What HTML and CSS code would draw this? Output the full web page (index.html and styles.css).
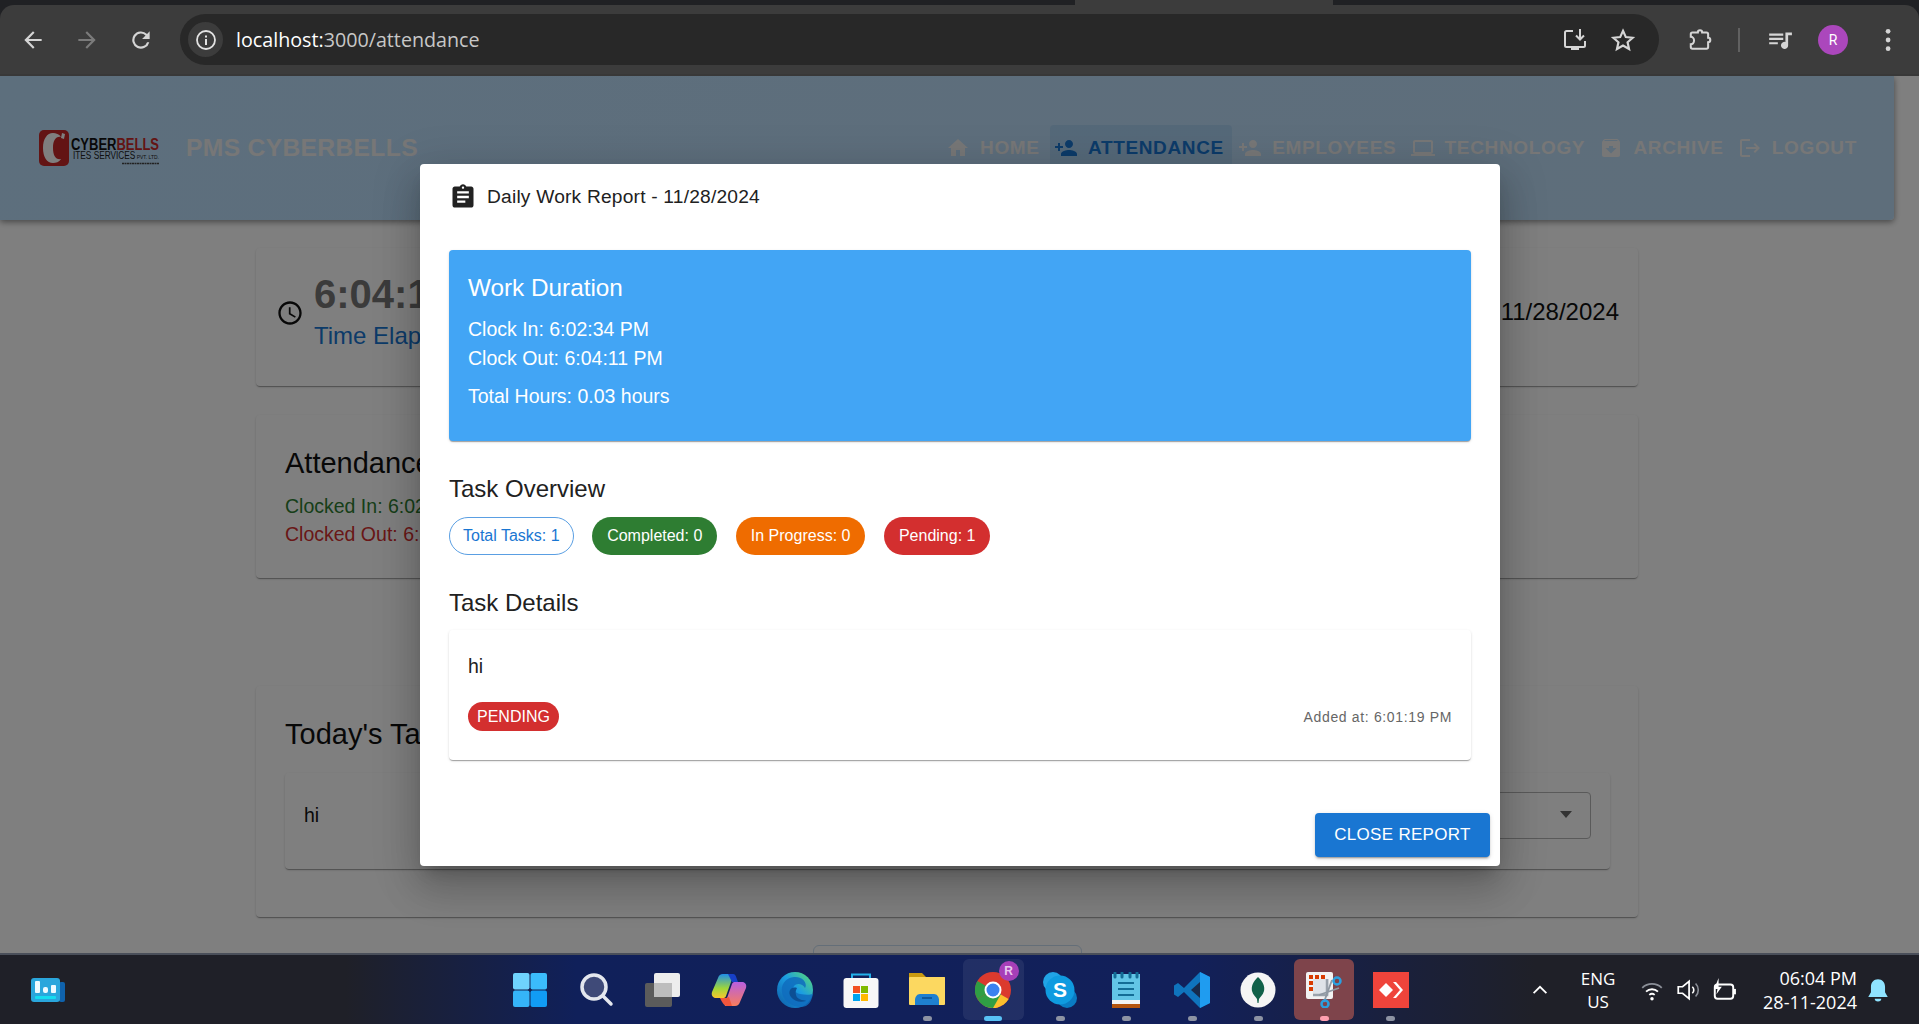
FILE: index.html
```html
<!DOCTYPE html>
<html lang="en">
<head>
  <meta charset="UTF-8" />
  <title>PMS Cyberbells</title>
  <link rel="stylesheet" href="styles.css">
</head>
<body>

  <!-- Browser chrome -->
  <div class="tabstrip"><span class="tab-active"></span></div>
  <header class="toolbar">
    <svg class="tb-ico" viewBox="0 0 24 24"><path d="M20 11H7.800l5.600-5.600L12 4l-8 8 8 8 1.400-1.400L7.800 13H20z"/></svg>
    <svg class="tb-ico tb-off" viewBox="0 0 24 24"><path d="M4 11h12.200l-5.600-5.600L12 4l8 8-8 8-1.400-1.400 5.600-5.600H4z"/></svg>
    <svg class="tb-ico" viewBox="0 0 24 24"><path d="M17.600 6.400A8 8 0 1 0 19.700 14h-2.100a6 6 0 1 1-1.400-6.200L13 11h7V4z"/></svg>
    <div class="omnibox">
      <span class="site-info">
        <svg viewBox="0 0 24 24"><circle cx="12" cy="12" r="9" fill="none" stroke="#e3e3e3" stroke-width="1.800"/><path fill="#e3e3e3" d="M11 11h2v6h-2zM11 7.500h2v2h-2z"/></svg>
      </span>
      <span class="url"><b>localhost:</b>3000/attendance</span>
      <svg class="omni-ico" viewBox="0 0 26 26"><path fill="none" stroke="#d5d5d5" stroke-width="2" d="M11 4H4.500A1.500 1.500 0 0 0 3 5.500v13A1.500 1.500 0 0 0 4.500 20h17a1.500 1.500 0 0 0 1.500-1.500V14"/><path fill="#d5d5d5" d="M9 20h8v3H9z"/><path fill="none" stroke="#d5d5d5" stroke-width="2" d="M18 2v10M14 8.500l4 4 4-4"/></svg>
      <svg class="omni-ico star" viewBox="0 0 24 24"><path fill="none" stroke="#d5d5d5" stroke-width="2" d="M12 3.500l2.600 5.800 6.300.6-4.700 4.200 1.400 6.200L12 17.100l-5.600 3.200 1.400-6.200L3.100 9.900l6.300-.6z"/></svg>
    </div>
    <svg class="tb-ico ext" viewBox="0 0 24 24"><path fill="none" stroke="#d5d5d5" stroke-width="1.900" d="M5 5h5a2 2 0 0 1 4 0h4a1.500 1.500 0 0 1 1.500 1.500V10a2 2 0 0 1 0 4v4.500A1.500 1.500 0 0 1 18 20H5a1.500 1.500 0 0 1-1.500-1.500V16a3 3.500 0 0 0 0-7V6.500A1.500 1.500 0 0 1 5 5z"/></svg>
    <span class="tb-divider"></span>
    <svg class="tb-ico media" viewBox="0 0 24 24"><path d="M2 6h13v2H2zM2 10h13v2H2zM2 14h8v2H2zM17 5h6v2.500h-3.500V17a3.300 3.300 0 1 1-2.500-3.200z"/></svg>
    <span class="avatar">R</span>
    <svg class="tb-ico dots" viewBox="0 0 24 24"><circle cx="13" cy="4" r="2.200"/><circle cx="13" cy="12" r="2.200"/><circle cx="13" cy="20" r="2.200"/></svg>
  </header>

  <main class="viewport">
    <div class="page">
      <div class="appbar">
        <svg class="logo" viewBox="0 0 122 36">
          <rect x="1" y="0" width="30" height="36" rx="5" fill="#c62828"/>
          <path d="M23 7c-2-3-5-4-8-4C9 3 5 9 5 18s4 15 10 15c3 0 6-1 8-4-5 1-8-3-8-11s3-12 8-11z" fill="#fff"/>
          <path d="M24 3l3 1-1 5-3-1z" fill="#fff"/>
          <text x="33" y="20" class="logo-big" textLength="88" lengthAdjust="spacingAndGlyphs">CYBER<tspan fill="#c62828">BELLS</tspan></text>
          <text x="35" y="29" class="logo-small" textLength="86" lengthAdjust="spacingAndGlyphs">ITES SERVICES<tspan class="logo-tiny"> PVT. LTD.</tspan></text>
          <path d="M84 33.500h37" stroke="#444" stroke-width="1.500" stroke-dasharray="2 .5"/>
        </svg>
        <span class="brand">PMS CYBERBELLS</span>
        <nav class="nav">
          <a class="nav-btn"><svg viewBox="0 0 24 24"><path d="M10 20v-6h4v6h5v-8h3L12 3 2 12h3v8z"/></svg>HOME</a>
          <a class="nav-btn active"><svg viewBox="0 0 24 24"><path d="M15 12c2.210 0 4-1.790 4-4s-1.790-4-4-4-4 1.790-4 4 1.790 4 4 4zm-9-2V7H4v3H1v2h3v3h2v-3h3v-2H6zm9 4c-2.670 0-8 1.340-8 4v2h16v-2c0-2.660-5.330-4-8-4z"/></svg>ATTENDANCE</a>
          <a class="nav-btn"><svg viewBox="0 0 24 24"><path d="M15 12c2.210 0 4-1.790 4-4s-1.790-4-4-4-4 1.790-4 4 1.790 4 4 4zm-9-2V7H4v3H1v2h3v3h2v-3h3v-2H6zm9 4c-2.670 0-8 1.340-8 4v2h16v-2c0-2.660-5.330-4-8-4z"/></svg>EMPLOYEES</a>
          <a class="nav-btn"><svg viewBox="0 0 24 24"><path d="M20 18c1.100 0 1.990-.9 1.990-2L22 6c0-1.100-.9-2-2-2H4c-1.100 0-2 .9-2 2v10c0 1.100.9 2 2 2H0v2h24v-2h-4zM4 6h16v10H4V6z"/></svg>TECHNOLOGY</a>
          <a class="nav-btn"><svg viewBox="0 0 24 24"><path d="M20.540 5.230l-1.390-1.680C18.880 3.210 18.470 3 18 3H6c-.47 0-.88.21-1.160.55L3.460 5.230C3.170 5.570 3 6.020 3 6.500V19c0 1.100.9 2 2 2h14c1.100 0 2-.9 2-2V6.500c0-.48-.17-.93-.46-1.270zM12 17.500 6.500 12H10v-2h4v2h3.500L12 17.500zM5.120 5l.81-1h12l.94 1H5.120z"/></svg>ARCHIVE</a>
          <a class="nav-btn"><svg viewBox="0 0 24 24"><path d="M17 7l-1.410 1.410L18.170 11H8v2h10.170l-2.580 2.580L17 17l5-5zM4 5h8V3H4c-1.100 0-2 .9-2 2v14c0 1.100.9 2 2 2h8v-2H4V5z"/></svg>LOGOUT</a>
        </nav>
      </div>

      <section class="card clock-card">
        <svg class="clock-ico" viewBox="0 0 24 24"><path d="M11.990 2C6.470 2 2 6.480 2 12s4.470 10 9.990 10C17.520 22 22 17.520 22 12S17.520 2 11.990 2zM12 20c-4.420 0-8-3.580-8-8s3.580-8 8-8 8 3.580 8 8-3.580 8-8 8zm.5-13H11v6l5.250 3.150.75-1.230-4.500-2.670z"/></svg>
        <div class="clock-text">
          <div class="clock-time">6:04:11 PM</div>
          <div class="clock-sub">Time Elapsed: 00:01:37</div>
        </div>
        <div class="clock-date">11/28/2024</div>
      </section>

      <section class="card status-card">
        <h3 class="card-title">Attendance Status</h3>
        <p class="st-in">Clocked In: 6:02:34 PM</p>
        <p class="st-out">Clocked Out: 6:04:11 PM</p>
      </section>

      <section class="card tasks-card">
        <h3 class="card-title">Today's Tasks</h3>
        <div class="task-row">
          <span class="task-row-name">hi</span>
          <div class="select"><span class="select-arrow"></span></div>
        </div>
      </section>

      <div class="report-btn-ghost"></div>
    </div>

    <!-- Dialog over the page -->
    <div class="overlay">
      <div class="modal">
        <div class="modal-title">
          <svg viewBox="0 0 24 24"><path d="M19 3h-4.180C14.400 1.840 13.300 1 12 1c-1.300 0-2.400.84-2.820 2H5c-1.100 0-2 .9-2 2v14c0 1.100.9 2 2 2h14c1.100 0 2-.9 2-2V5c0-1.100-.9-2-2-2zm-7 0c.55 0 1 .45 1 1s-.45 1-1 1-1-.45-1-1 .45-1 1-1zm2 14H7v-2h7v2zm3-4H7v-2h10v2zm0-4H7V7h10v2z"/></svg>
          <span>Daily Work Report - 11/28/2024</span>
        </div>
        <div class="duration">
          <h4>Work Duration</h4>
          <p>Clock In: 6:02:34 PM</p>
          <p>Clock Out: 6:04:11 PM</p>
          <p class="total">Total Hours: 0.03 hours</p>
        </div>
        <h5 class="sec-title">Task Overview</h5>
        <div class="chips">
          <span class="chip chip-total">Total Tasks: 1</span>
          <span class="chip chip-done">Completed: 0</span>
          <span class="chip chip-prog">In Progress: 0</span>
          <span class="chip chip-pend">Pending: 1</span>
        </div>
        <h5 class="sec-title details">Task Details</h5>
        <div class="task-card">
          <div class="task-name">hi</div>
          <div class="task-foot">
            <span class="badge">PENDING</span>
            <span class="added">Added at: 6:01:19 PM</span>
          </div>
        </div>
        <div class="modal-actions"><button class="close-btn">CLOSE REPORT</button></div>
      </div>
    </div>
  </main>

  <!-- Windows taskbar -->
  <footer class="taskbar">
    <svg class="widget" viewBox="0 0 34 24">
      <rect x="28" y="4" width="6" height="20" rx="2" fill="#0f62ac"/>
      <rect x="0" y="0" width="29" height="24" rx="3" fill="#2aa6dc"/>
      <rect x="4" y="3" width="5" height="12" rx="1" fill="#eefaff"/>
      <rect x="12" y="9" width="5" height="6" rx="2" fill="#eefaff"/>
      <rect x="20" y="7" width="5" height="8" rx="1" fill="#eefaff"/>
      <rect x="4" y="18" width="21" height="3" rx="1" fill="#16dcf0"/>
    </svg>
    <div class="tray-apps">
      <span class="app"><svg viewBox="0 0 36 36"><rect x="1" y="1" width="16.500" height="16.500" rx="2" fill="#6fd3fd"/><rect x="18.500" y="1" width="16.500" height="16.500" rx="2" fill="#3bbcfb"/><rect x="1" y="18.500" width="16.500" height="16.500" rx="2" fill="#35b4f8"/><rect x="18.500" y="18.500" width="16.500" height="16.500" rx="2" fill="#119cf5"/></svg></span>
      <span class="app"><svg viewBox="0 0 36 36"><circle cx="16" cy="15" r="12" fill="#3f4a78" stroke="#e4e7ee" stroke-width="3.500"/><path d="M25 24l8 8" stroke="#e4e7ee" stroke-width="3.500" stroke-linecap="round"/></svg></span>
      <span class="app"><svg viewBox="0 0 36 36"><rect x="1" y="11" width="27" height="24" rx="2" fill="#5b5b5b"/><rect x="10" y="1" width="26" height="24" rx="2" fill="#ededed"/><rect x="10" y="11" width="18" height="14" fill="#bdbdbd"/></svg></span>
      <span class="app"><svg viewBox="0 0 36 36"><defs><linearGradient id="cpa" x1="0" y1="0" x2="0" y2="1"><stop offset="0" stop-color="#1f8fe8"/><stop offset=".6" stop-color="#9fd63a"/><stop offset="1" stop-color="#f7c62e"/></linearGradient><linearGradient id="cpb" x1="0" y1="1" x2="0" y2="0"><stop offset="0" stop-color="#b85fe0"/><stop offset="1" stop-color="#f77d5d"/></linearGradient></defs><path d="M12 2h9c1 0 1.500.8 1.200 1.800L15 24c-.5 1.500-1.500 2-3 2H5c-3 0-5-2.500-4-6L7 6c.8-2.500 2.500-4 5-4z" fill="url(#cpa)"/><path transform="rotate(180 18 18)" d="M12 2h9c1 0 1.500.8 1.200 1.800L15 24c-.5 1.500-1.500 2-3 2H5c-3 0-5-2.500-4-6L7 6c.8-2.500 2.500-4 5-4z" fill="url(#cpb)"/><path d="M17 2h5c2 0 3 2 3.500 4l1.500 4h-6z" fill="#1740c8"/><path d="M9 26h6l3-1 3 9h-5c-3 0-5-4-7-8z" fill="#f0553c"/></svg></span>
      <span class="app"><svg viewBox="0 0 36 36"><defs><linearGradient id="edg" x1="0" y1="1" x2="1" y2="0"><stop offset="0" stop-color="#0c59a4"/><stop offset=".55" stop-color="#1b9de2"/><stop offset="1" stop-color="#5fe06a"/></linearGradient></defs><circle cx="18" cy="18" r="18" fill="url(#edg)"/><path d="M36 22c-3 1-8 1-13 0-5-1-9-6-5-9 3-2 8-1 10 3 3-5-3-12-11-11C8 6 2 14 6 24c3 8 14 13 23 10 4-2 6-7 7-12z" fill="#0f6cbd" opacity=".85"/><path d="M20 16c-6-2-10 4-6 9 3 4 9 6 15 4 1-1-9 0-10-6-1-3 0-5 1-7z" fill="#0c4f94"/></svg></span>
      <span class="app"><svg viewBox="0 0 36 36"><path d="M9 7V2.500h18V7" fill="none" stroke="#22b0ea" stroke-width="2"/><rect x="0.500" y="6" width="35" height="30" rx="3" fill="#f7f7f7"/><rect x="10" y="14" width="7" height="7" fill="#f25022"/><rect x="18" y="14" width="7" height="7" fill="#7fba00"/><rect x="10" y="22" width="7" height="7" fill="#00a4ef"/><rect x="18" y="22" width="7" height="7" fill="#ffb900"/></svg></span>
      <span class="app"><svg viewBox="0 0 36 36"><path d="M0 1h13l4 4h19v6H0z" fill="#c99a10"/><rect x="0" y="5" width="36" height="28" rx="1" fill="#fcd860"/><path d="M6 28c0-3 2-6 5-6h14c3 0 5 3 5 6v5H6z" fill="#1f80d0"/><rect x="13" y="25" width="10" height="2" fill="#0f5a9e"/></svg><i class="pip"></i></span>
      <span class="app app-on"><svg viewBox="0 0 36 36"><circle cx="18" cy="18" r="18" fill="#db3a2e"/><path d="M18 18L33.600 27A18 18 0 0 1 9 33.600z" fill="#fbc02d"/><path d="M18 18L2.400 27A18 18 0 0 1 2.400 9z" fill="#2f9e44"/><path d="M2.400 27A18 18 0 0 0 18 36L26 22 18 18z" fill="#2f9e44"/><circle cx="18" cy="18" r="8.500" fill="#fff"/><circle cx="18" cy="18" r="6.500" fill="#3b82f0"/></svg><span class="profile-dot">R</span><i class="pip pip-on"></i></span>
      <span class="app"><svg viewBox="0 0 36 36"><circle cx="11" cy="10" r="10" fill="#21a4e6"/><circle cx="25" cy="26" r="10" fill="#0a7cc4"/><circle cx="18" cy="18" r="14.500" fill="#0f9be0"/><text x="18" y="25" class="skype-s">S</text></svg><i class="pip"></i></span>
      <span class="app"><svg viewBox="0 0 36 36"><rect x="4" y="2" width="28" height="30" fill="#62c5e6"/><rect x="4" y="30" width="28" height="6" fill="#b5550f"/><rect x="4" y="28" width="28" height="4" fill="#f4f4f4"/><path d="M10 11h16M10 17h16M10 23h16" stroke="#136d96" stroke-width="2"/><path d="M7 1v4M14 1v4M22 1v4M29 1v4" stroke="#136d96" stroke-width="3" stroke-linecap="round"/></svg><i class="pip"></i></span>
      <span class="app"><svg viewBox="0 0 36 36"><path d="M26 0l10 5v26l-10 5L10 20l-6 5-4-2.500V13.500L4 11l6 5z" fill="#0f74bd"/><path d="M26 0l10 5v26l-10 5z" fill="#1f9cf0"/><path d="M26 10l-9 8 9 8z" fill="#18243f" opacity=".9"/></svg><i class="pip"></i></span>
      <span class="app"><svg viewBox="0 0 36 36"><circle cx="18" cy="18" r="17.500" fill="#f5f5f5"/><path d="M18 5c5 5 7 9 6 14-1 4-4 6-5 8l-.5 4h-1l-.5-4c-1-2-4-4-5-8-1-5 1-9 6-14z" fill="#116149"/></svg><i class="pip"></i></span>
      <span class="app app-snip"><svg viewBox="0 0 36 36"><rect x="0" y="0" width="27" height="27" rx="2" fill="#f2f2f2"/><path d="M3 3h4v4H3zM9 3h4v4H9zM15 3h4v4h-4zM3 9h4v4H3zM3 15h4v4H3z" fill="#d83b01"/><rect x="7" y="7" width="16" height="16" fill="#dfe3e8"/><path d="M21 7v16H7" fill="none" stroke="#9aa2ab" stroke-width="2.500"/><path d="M13 23l20-7M26 8L18 30" stroke="#8f98a2" stroke-width="1.800"/><circle cx="31" cy="9" r="3.500" fill="none" stroke="#2aa0e0" stroke-width="2.500"/><circle cx="19" cy="32" r="3.500" fill="none" stroke="#2aa0e0" stroke-width="2.500"/></svg><i class="pip pip-pink"></i></span>
      <span class="app"><svg viewBox="0 0 36 36"><rect width="36" height="36" fill="#ef443b"/><path d="M13 11l7 7-7 7-7-7z" fill="#fff"/><path d="M20 10h3l7 8-7 8h-3l7-8z" fill="#fff"/></svg><i class="pip"></i></span>
    </div>
    <div class="sys">
      <svg class="sys-chev" viewBox="0 0 20 12"><path d="M2 10l8-8 8 8" fill="none" stroke="#fff" stroke-width="2.200"/></svg>
      <div class="lang"><span>ENG</span><span>US</span></div>
      <svg class="sys-ico" viewBox="0 0 24 24"><g fill="none" stroke="#fff" stroke-width="1.700"><path d="M6.500 13.500a8 8 0 0 1 11 0M9.500 16.500a4 4 0 0 1 5 0"/><path stroke="#8b8f98" d="M3 10a13 13 0 0 1 18 0"/></g><circle cx="12" cy="20" r="1.600" fill="#fff"/></svg>
      <svg class="sys-ico" viewBox="0 0 24 24"><path d="M3 9h4l6-5v16l-6-5H3z" fill="none" stroke="#fff" stroke-width="1.600"/><path d="M16 9a4 4 0 0 1 0 6" fill="none" stroke="#fff" stroke-width="1.500"/><path d="M19 6a8.500 8.500 0 0 1 0 12" fill="none" stroke="#8b8f98" stroke-width="1.500"/></svg>
      <svg class="sys-ico" viewBox="0 0 24 24"><rect x="3.500" y="7" width="17" height="13" rx="2.500" fill="none" stroke="#fff" stroke-width="1.800"/><rect x="21" y="11" width="2" height="5" fill="#fff"/><path d="M7 1L3 11h3l-1 5 5-7H7z" fill="#fff"/></svg>
      <div class="clock"><span>06:04 PM</span><span>28-11-2024</span></div>
      <svg class="bell" viewBox="0 0 24 24"><path d="M12 2c-4 0-6.500 3-6.500 7v5L3 18.500h18L18.500 14V9C18.500 5 16 2 12 2zM9 20a3 2.500 0 0 0 6 0z" fill="#8fe3ff"/></svg>
    </div>
  </footer>

</body>
</html>
```

FILE: styles.css
```css
* {
  box-sizing: border-box;
}

html, body {
  height: 100%;
}

body {
  margin: 0;
  display: flex;
  flex-direction: column;
  height: 1024px;
  overflow: hidden;
  font-family: 'Liberation Sans', Arial, sans-serif;
  background: #202124;
  color: #212121;
}

/* Browser */
.tabstrip {
  height: 5px;
  background: #202124;
  position: relative;
  flex: none;
}

.tab-active {
  position: absolute;
  left: 1075px;
  width: 258px;
  top: 0;
  bottom: 0;
  background: #3c3c3c;
}

.toolbar {
  height: 71px;
  flex: none;
  display: flex;
  align-items: center;
  padding-left: 20px;
  background: #3c3c3c;
  border-bottom: 2px solid #383838;
  border-radius: 14px 14px 0 0;
}

.tb-ico {
  width: 26px;
  height: 26px;
  fill: #d5d5d5;
  flex: none;
  margin-right: 28px;
}

.tb-off {
  fill: #7b7b7b;
}

.omnibox {
  width: 1479px;
  height: 51px;
  margin: 0 28px 0 -2px;
  border-radius: 26px;
  background: #282828;
  display: flex;
  align-items: center;
  padding-left: 8px;
  flex: none;
}

.site-info {
  width: 35px;
  height: 35px;
  border-radius: 50%;
  background: #3c3c3c;
  display: flex;
  align-items: center;
  justify-content: center;
}

.site-info svg {
  width: 24px;
  height: 24px;
}

.url {
  margin-left: 13px;
  font-family: 'Open Sans', sans-serif;
  font-size: 19.7px;
  color: #c7c7c7;
  flex: 1;
}

.url b {
  font-weight: 400;
  color: #fff;
}

.omni-ico {
  width: 26px;
  height: 26px;
  margin-right: 22px;
}

.omni-ico.star {
  margin-right: 23px;
}

.ext {
  margin-right: 25px;
}

.tb-divider {
  width: 2px;
  height: 24px;
  background: #616161;
  margin-right: 27px;
}

.media {
  margin-right: 25px;
}

.avatar {
  width: 30px;
  height: 30px;
  border-radius: 50%;
  background: #ab47bc;
  color: #fff;
  font-family: Roboto, sans-serif;
  font-size: 14px;
  display: flex;
  align-items: center;
  justify-content: center;
  margin-right: 26px;
  flex: none;
}

.dots {
  margin-right: 0;
}

/* Page behind dialog */
.viewport {
  position: relative;
  flex: 1;
  overflow: hidden;
  min-height: 0;
  background: #fff;
}

.page {
  height: 100%;
  overflow: hidden;
}

.appbar {
  width: 1894px;
  height: 144px;
  display: flex;
  align-items: center;
  padding: 0 29px 0 38px;
  background: linear-gradient(135deg, #bbdefb, #bcdcf6);
  box-shadow: 0 2px 6px rgba(0, 0, 0, .45);
  border-radius: 0 0 4px 0;
}

.logo {
  width: 122px;
  height: 36px;
  flex: none;
}

.logo-big {
  font: 700 16px 'Liberation Sans', sans-serif;
  fill: #111;
}

.logo-small {
  font: 400 10px 'Liberation Sans', sans-serif;
  fill: #222;
}

.logo-tiny {
  font-size: 6px;
}

.brand {
  margin-left: 26px;
  font-size: 24.7px;
  font-weight: 700;
  color: #eee;
  letter-spacing: .3px;
}

.nav {
  margin-left: auto;
  display: flex;
  align-items: center;
  gap: 2.3px;
}

.nav-btn {
  height: 47px;
  display: flex;
  align-items: center;
  padding: 0 8px 0 4px;
  border-radius: 4px;
  font-size: 19px;
  font-weight: 700;
  letter-spacing: .65px;
  color: #eee;
}

.nav-btn svg {
  width: 24px;
  height: 24px;
  fill: currentColor;
  margin-right: 10px;
}

.nav-btn.active {
  color: #1976d2;
  background: rgba(25, 118, 210, .1);
}

.card {
  width: 1382px;
  margin-left: 256px;
  background: #fff;
  border-radius: 4px;
  box-shadow: 0 2px 1px -1px rgba(0, 0, 0, .2), 0 1px 1px rgba(0, 0, 0, .14), 0 1px 3px rgba(0, 0, 0, .12);
}

.clock-card {
  height: 138px;
  margin-top: 28px;
  display: flex;
  align-items: center;
  padding: 0 19px 0 20px;
}

.clock-ico {
  width: 28px;
  height: 28px;
  fill: #111;
  margin-top: -9px;
}

.clock-text {
  margin: -10px 0 0 10px;
  flex: 1;
}

.clock-time {
  font-size: 40px;
  font-weight: 700;
  color: #777;
  line-height: 47px;
}

.clock-sub {
  font-size: 24px;
  color: #1976d2;
  line-height: 36px;
}

.clock-date {
  font-size: 24px;
  color: #111;
  margin-top: -10px;
}

.status-card {
  height: 163px;
  margin-top: 29px;
  padding: 28px 28px 0 29px;
}

.card-title {
  margin: 0;
  font-size: 29px;
  font-weight: 400;
  line-height: 40px;
  color: #111;
}

.status-card p {
  margin: 0;
  font-size: 19.5px;
  line-height: 28px;
}

.status-card .card-title {
  margin-bottom: 9px;
}

.st-in {
  color: #2e7d32;
}

.st-out {
  color: #d32f2f;
}

.tasks-card {
  height: 231px;
  margin-top: 108px;
  padding: 28px 28px 28px 29px;
}

.tasks-card .card-title {
  margin-bottom: 19px;
}

.task-row {
  height: 96px;
  display: flex;
  justify-content: space-between;
  padding: 19px 19px 0 19px;
  border-radius: 4px;
  font-size: 19.5px;
  line-height: 28px;
  color: #111;
  box-shadow: 0 2px 1px -1px rgba(0, 0, 0, .2), 0 1px 1px rgba(0, 0, 0, .14), 0 1px 3px rgba(0, 0, 0, .12);
}

.task-row-name {
  padding-top: 9px;
}

.select {
  width: 200px;
  height: 47px;
  border: 1px solid #b5b5b5;
  border-radius: 4px;
  position: relative;
}

.select-arrow {
  position: absolute;
  right: 18px;
  top: 18px;
  border-left: 6px solid transparent;
  border-right: 6px solid transparent;
  border-top: 7px solid #666;
}

.report-btn-ghost {
  width: 269px;
  height: 40px;
  margin: 28px 0 0 813px;
  border: 1px solid #c8dcf0;
  border-radius: 6px;
}

/* Dialog */
.overlay {
  position: absolute;
  inset: 0;
  background: rgba(0, 0, 0, .5);
  padding: 88px 0 0 420px;
}

.modal {
  width: 1080px;
  height: 702px;
  background: #fff;
  border-radius: 4px;
  padding: 0 29px;
  box-shadow: 0 11px 15px -7px rgba(0, 0, 0, .2), 0 24px 38px 3px rgba(0, 0, 0, .14), 0 9px 46px 8px rgba(0, 0, 0, .12);
}

.modal-title {
  height: 66px;
  display: flex;
  align-items: center;
  font-size: 19.2px;
  letter-spacing: .2px;
  color: #212121;
}

.modal-title svg {
  width: 28px;
  height: 28px;
  fill: #212121;
  margin-right: 10px;
}

.duration {
  height: 191px;
  margin-top: 20px;
  padding: 21px 19px 0;
  background: #42a5f5;
  color: #fff;
  border-radius: 4px;
  box-shadow: 0 2px 1px -1px rgba(0, 0, 0, .2), 0 1px 1px rgba(0, 0, 0, .14), 0 1px 3px rgba(0, 0, 0, .12);
}

.duration h4 {
  margin: 0 0 10px;
  font-size: 24.3px;
  font-weight: 400;
  line-height: 34px;
}

.duration p {
  margin: 0;
  font-size: 19.5px;
  line-height: 29px;
}

.duration .total {
  margin-top: 9px;
}

.sec-title {
  margin: 32px 0 0;
  font-size: 24px;
  font-weight: 400;
  line-height: 32px;
  color: #212121;
}

.sec-title.details {
  margin-top: 32px;
}

.chips {
  display: flex;
  gap: 18.5px;
  margin-top: 12px;
}

.chip {
  height: 38px;
  display: flex;
  align-items: center;
  padding: 0 15px;
  border-radius: 19px;
  font-size: 16px;
  color: #fff;
}

.chip-total {
  padding: 0 13px;
  color: #1976d2;
  border: 1px solid #5a9fe3;
}

.chip-done {
  background: #2e7d32;
}

.chip-prog {
  background: #ef6c00;
}

.chip-pend {
  background: #d32f2f;
}

.task-card {
  height: 130px;
  margin-top: 11px;
  padding: 19px 19px 0;
  border-radius: 4px;
  box-shadow: 0 2px 1px -1px rgba(0, 0, 0, .2), 0 1px 1px rgba(0, 0, 0, .14), 0 1px 3px rgba(0, 0, 0, .12);
}

.task-name {
  font-size: 19.5px;
  line-height: 34px;
}

.task-foot {
  display: flex;
  justify-content: space-between;
  align-items: center;
  margin-top: 19px;
}

.badge {
  height: 29px;
  display: flex;
  align-items: center;
  padding: 0 9px;
  border-radius: 15px;
  background: #d32f2f;
  color: #fff;
  font-size: 16px;
}

.added {
  font-size: 14px;
  letter-spacing: .65px;
  color: #666;
}

.modal-actions {
  display: flex;
  justify-content: flex-end;
  margin: 53px -19px 0 0;
}

.close-btn {
  width: 175px;
  height: 44px;
  border: 0;
  border-radius: 4px;
  background: #1976d2;
  color: #fff;
  font-family: inherit;
  font-size: 17px;
  letter-spacing: .3px;
  box-shadow: 0 3px 1px -2px rgba(0, 0, 0, .2), 0 2px 2px rgba(0, 0, 0, .14), 0 1px 5px rgba(0, 0, 0, .12);
}

/* Taskbar */
.taskbar {
  height: 71px;
  flex: none;
  position: relative;
  display: flex;
  align-items: center;
  border-top: 2px solid #4a4f5a;
  background: linear-gradient(90deg, #1f2028 18%, #10205a 30%, #12205a 62%, #1f2028 80%);
  color: #fff;
}

.widget {
  width: 34px;
  height: 24px;
  margin-left: 31px;
}

.tray-apps {
  position: absolute;
  left: 497px;
  top: 0;
  bottom: 0;
  display: flex;
}

.app {
  width: 66.2px;
  height: 69px;
  display: flex;
  align-items: center;
  justify-content: center;
  position: relative;
}

.app svg {
  width: 36px;
  height: 36px;
  position: relative;
}

.app-on::before,
.app-snip::before {
  content: "";
  position: absolute;
  left: 3px;
  right: 3px;
  top: 4px;
  bottom: 4px;
  border-radius: 6px;
  background: rgba(255, 255, 255, .07);
}

.app-snip::before {
  background: #7e444b;
}

.pip {
  position: absolute;
  bottom: 3px;
  left: 29px;
  width: 9px;
  height: 5px;
  border-radius: 3px;
  background: #8d93a3;
}

.pip-on {
  left: 24px;
  width: 18px;
  background: #58c1f5;
}

.pip-pink {
  background: #ff9fb0;
}

.profile-dot {
  position: absolute;
  right: 8px;
  top: 6px;
  width: 20px;
  height: 20px;
  border-radius: 50%;
  background: #a63fb8;
  color: #e9c8ef;
  font-size: 12px;
  font-weight: 700;
  display: flex;
  align-items: center;
  justify-content: center;
}

.skype-s {
  font: 700 21px 'Liberation Sans', sans-serif;
  fill: #fff;
  text-anchor: middle;
}

.sys {
  margin-left: auto;
  display: flex;
  align-items: center;
  font-family: 'Open Sans', sans-serif;
  padding-right: 28px;
}

.sys-chev {
  width: 16px;
  height: 10px;
}

.lang {
  width: 50px;
  margin: 0 16px 0 25px;
  display: flex;
  flex-direction: column;
  align-items: center;
  font-size: 17px;
  line-height: 23px;
}

.sys-ico {
  width: 26px;
  height: 26px;
  margin-right: 10px;
}

.clock {
  width: 110px;
  margin-right: 8px;
  display: flex;
  flex-direction: column;
  align-items: flex-end;
  font-size: 18px;
  line-height: 24px;
}

.bell {
  width: 26px;
  height: 26px;
}
```
